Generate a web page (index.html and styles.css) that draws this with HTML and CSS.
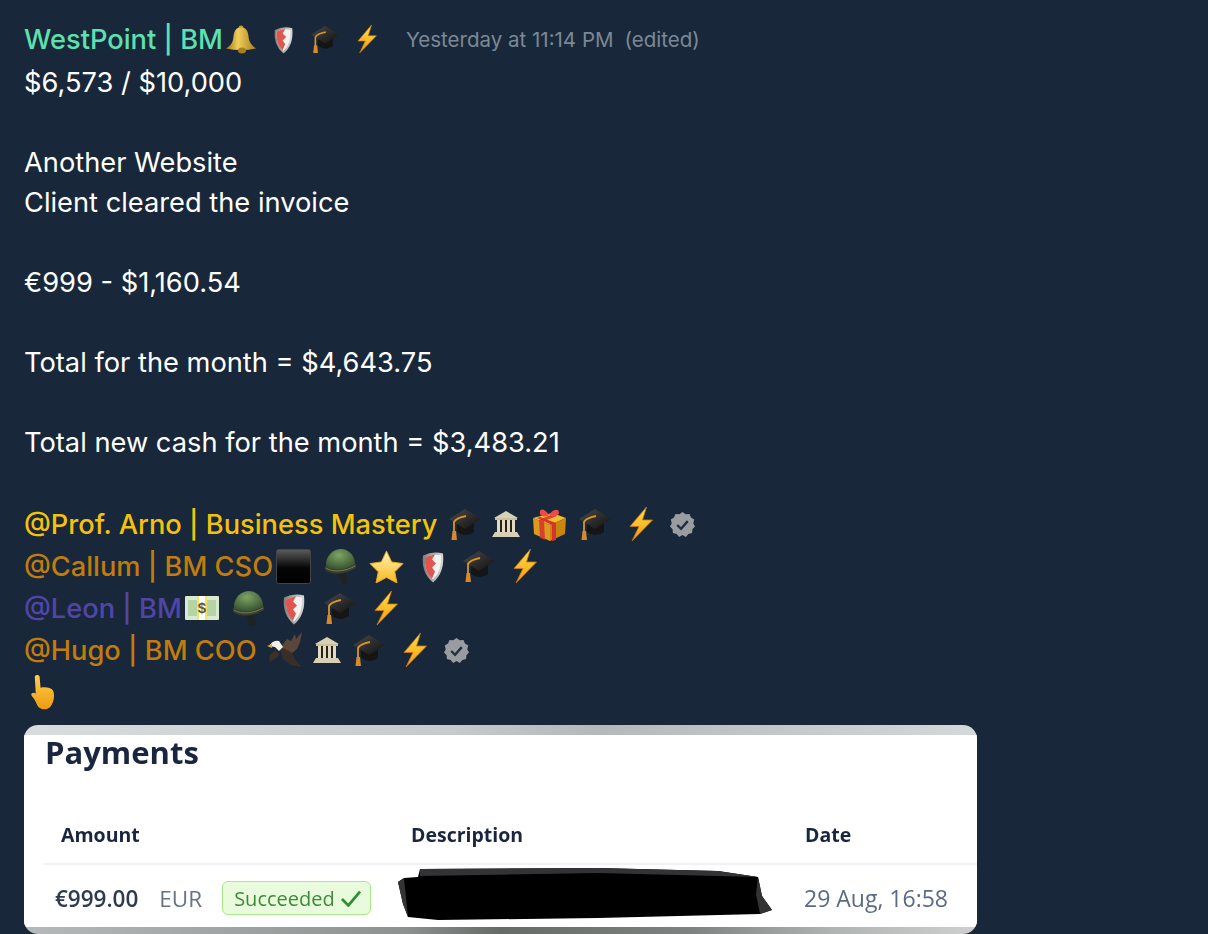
FILE: index.html
```html
<!DOCTYPE html>
<html lang="en">
<head>
    <meta charset="UTF-8">
    <meta name="viewport" content="width=device-width, initial-scale=1.0">
    <title>Message</title>
    <link rel="stylesheet" href="styles.css">
</head>
<body>
    <!-- Emoji drawings, reused through <use> -->
    <svg class="defs" aria-hidden="true">
        <defs>
            <linearGradient id="gBolt" x1="0" y1="0" x2="0" y2="1"><stop offset="0" stop-color="#ffe14d"/><stop offset="1" stop-color="#f59a0c"/></linearGradient>
            <linearGradient id="gGold" x1="0" y1="0" x2="1" y2="0"><stop offset="0" stop-color="#9b7414"/><stop offset=".4" stop-color="#f0cf5a"/><stop offset="1" stop-color="#a57d18"/></linearGradient>
            <linearGradient id="gCap" x1="0" y1="0" x2="1" y2="1"><stop offset="0" stop-color="#4a4a4a"/><stop offset="1" stop-color="#111"/></linearGradient>
            <linearGradient id="gSteel" x1="0" y1="0" x2="1" y2="0"><stop offset="0" stop-color="#7d7d7d"/><stop offset="1" stop-color="#d8d8d8"/></linearGradient>
            <linearGradient id="gStar" x1="0" y1="0" x2="0" y2="1"><stop offset="0" stop-color="#fff3b8"/><stop offset="1" stop-color="#f9b81e"/></linearGradient>
            <radialGradient id="gHelm" cx=".45" cy=".3" r=".7"><stop offset="0" stop-color="#7fa463"/><stop offset="1" stop-color="#34502f"/></radialGradient>
            <linearGradient id="gBlack" x1="0" y1="0" x2="0" y2="1"><stop offset="0" stop-color="#5c5c5c"/><stop offset=".55" stop-color="#050505"/><stop offset="1" stop-color="#000"/></linearGradient>
            <linearGradient id="gHand" x1="0" y1="0" x2="0" y2="1"><stop offset="0" stop-color="#ffcf4a"/><stop offset="1" stop-color="#ee9a12"/></linearGradient>
        </defs>

        <symbol id="bolt" viewBox="0 0 24 34">
            <path d="M17.500 0 1 19.500 10 19.500 3 34 23.500 13 13.500 13Z" fill="url(#gBolt)" stroke="#c9780a" stroke-width=".8"/>
        </symbol>
        <symbol id="cap" viewBox="0 0 32 32">
            <path d="M8 15v9q9 6 17 0v-9z" fill="#151515"/>
            <path d="M0 11 16 1l16 10-16 10z" fill="url(#gCap)"/>
            <path d="M17 8Q7 10 5 14v11" fill="none" stroke="#d9962a" stroke-width="1.800"/>
            <path d="M3.500 23h3.500l1 9H2.500z" fill="#d9882a"/>
        </symbol>
        <symbol id="shield" viewBox="0 0 24 32">
            <path d="M2 5Q12 0 22 3 24 22 12 32 0 22 2 5Z" fill="url(#gSteel)"/>
            <path d="M4 7Q12 3 20 5 21 21 12 29 3 21 4 7Z" fill="#f4f1ee"/>
            <path d="M4 7Q8 5 14 4L11 9l4 4-4 4 3 4-3 7Q3 21 4 7Z" fill="#e0564f"/>
        </symbol>
        <symbol id="bell" viewBox="0 0 30 28">
            <circle cx="15" cy="2.500" r="2.500" fill="#c59b2c"/>
            <path d="M15 2C8 2 8 8 7 14 6 19 3 21 0 23q15 3 30 0c-3-2-6-5-7-9-1-6-1-12-8-12Z" fill="url(#gGold)"/>
            <ellipse cx="16" cy="25" rx="4" ry="3" fill="#a87f1e"/>
        </symbol>
        <symbol id="temple" viewBox="0 0 28 28">
            <path d="M14 1 26 8H2z" fill="#d8d0b4"/>
            <rect x="3" y="8" width="22" height="2" fill="#c9c0a2"/>
            <rect x="5" y="10" width="18" height="12" fill="#2a2418"/>
            <rect x="5" y="10" width="3" height="12" fill="#e2dbc2"/>
            <rect x="10" y="10" width="3" height="12" fill="#e2dbc2"/>
            <rect x="15" y="10" width="3" height="12" fill="#e2dbc2"/>
            <rect x="20" y="10" width="3" height="12" fill="#e2dbc2"/>
            <path d="M3 22h22l3 5H0z" fill="#d8d0b4"/>
        </symbol>
        <symbol id="gift" viewBox="0 0 34 34">
            <path d="M1 11 20 6l14 5-16 7z" fill="#f0be2e"/>
            <path d="M1 11 18 18v16L2 27z" fill="#dd9a1c"/>
            <path d="M34 11 18 18v16l15-7z" fill="#c9860f"/>
            <path d="M8 10 24 16v17l-4 1V18L5 11z" fill="#d8322d"/>
            <path d="M25 9 12 14l1 19-5-2-1-18 14-6z" fill="#d8322d" opacity=".85"/>
            <path d="M17 8C12 1 7 1 8 7c1 3 6 3 9 1 3 2 9 2 10-2 0-5-6-4-10 2z" fill="#ee4a47"/>
        </symbol>
        <symbol id="verified" viewBox="0 0 26 26">
            <path d="M13 0l3.300 2.300 4-.3 1.500 3.700 3.400 2.100-1 3.900L26 15l-2.700 2.900-.3 4-3.900.9L16.500 26 13 24l-3.500 2-2.600-3.200-3.900-.9-.3-4L0 15l1.800-3.300-1-3.900 3.400-2.100L5.700 2l4 .3z" fill="#9a9ca0"/>
            <path d="M7.500 13.500l4 4 7-8" fill="none" stroke="#1f2f42" stroke-width="2.400"/>
        </symbol>
        <symbol id="square" viewBox="0 0 35 35">
            <rect x=".5" y=".5" width="34" height="34" rx="2" fill="url(#gBlack)" stroke="#444"/>
        </symbol>
        <symbol id="helmet" viewBox="0 0 32 36">
            <path d="M14 24l7-1 3 12-6 1z" fill="#1d2320"/>
            <path d="M2 19C1 8 9 1 17 1 25 1 31 8 31 16v2C22 22 10 24 2 19Z" fill="url(#gHelm)"/>
            <path d="M1 18C10 24 22 22 32 16v4C22 26 10 28 1 22Z" fill="#39402e"/>
            <path d="M2 20C10 25 22 23 31 18" fill="none" stroke="#8a8560" stroke-width=".8"/>
        </symbol>
        <symbol id="star" viewBox="0 0 36 34">
            <path d="M18 1l5.300 11.300L35 14l-8.500 8.500L28.800 34 18 28.300 7.200 34l2.300-11.500L1 14l11.700-1.700Z" fill="url(#gStar)" stroke="#e9a820" stroke-linejoin="round"/>
        </symbol>
        <symbol id="money" viewBox="0 0 34 26">
            <rect x="0" y="1" width="34" height="24" rx="1" fill="#d9ead0"/>
            <rect x="3" y="5" width="28" height="16" fill="#b6d3a6"/>
            <rect x="12" y="1" width="10" height="24" fill="#f6e36a"/>
            <rect x="14" y="1" width="6" height="24" fill="#fff"/>
        </symbol>
        <symbol id="eagle" viewBox="0 0 36 36">
            <path d="M13 16 20 7l4 2 4-7 1 5 6-7-2 10-3 7-6 5z" fill="#5a473a"/>
            <path d="M8 18 2 24l1 6 6-4 4-4z" fill="#3d3029"/>
            <path d="M12 14l12 6 6 10 5 5-11-2-8-6z" fill="#3a2e26"/>
            <path d="M2 14Q6 8 12 9l4 6-4 4-4-4z" fill="#f2efe8"/>
            <path d="M0 14l5-2v4z" fill="#e5a92a"/>
        </symbol>
        <symbol id="hand" viewBox="0 0 26 36">
            <path d="M5 2c0-3 5-3 5 0l1 11c5-1 11 0 13 3 2 5 1 12-3 17-4 4-10 3-13-1-2-4-3-7-6-10-2-3 1-5 4-3z" fill="url(#gHand)"/>
        </symbol>
    </svg>

    <article class="message">
        <header class="msg-head">
            <span class="author">WestPoint | BM</span>
            <svg class="ic bell g3"><use href="#bell"/></svg>
            <svg class="ic shield-s g17"><use href="#shield"/></svg>
            <svg class="ic cap-s g17"><use href="#cap"/></svg>
            <svg class="ic bolt-s g18"><use href="#bolt"/></svg>
            <span class="stamp">Yesterday at 11:14 PM</span>
            <span class="edited">(edited)</span>
        </header>

        <div class="msg-body">
            <p>$6,573 / $10,000</p>
            <p class="blank"></p>
            <p>Another Website</p>
            <p>Client cleared the invoice</p>
            <p class="blank"></p>
            <p>€999 - $1,160.54</p>
            <p class="blank"></p>
            <p>Total for the month = $4,643.75</p>
            <p class="blank"></p>
            <p>Total new cash for the month = $3,483.21</p>
            <p class="blank"></p>
        </div>

        <div class="mentions">
            <div class="mention">
                <span class="gold">@Prof. Arno | Business Mastery</span>
                <svg class="ic cap g12"><use href="#cap"/></svg>
                <svg class="ic temple g11"><use href="#temple"/></svg>
                <svg class="ic gift g12"><use href="#gift"/></svg>
                <svg class="ic cap g13"><use href="#cap"/></svg>
                <svg class="ic bolt g18"><use href="#bolt"/></svg>
                <svg class="ic verified g17"><use href="#verified"/></svg>
            </div>
            <div class="mention">
                <span class="amber">@Callum | BM CSO</span>
                <svg class="ic square g3"><use href="#square"/></svg>
                <svg class="ic helmet g13"><use href="#helmet"/></svg>
                <svg class="ic star g13"><use href="#star"/></svg>
                <svg class="ic shield g17"><use href="#shield"/></svg>
                <svg class="ic cap g18"><use href="#cap"/></svg>
                <svg class="ic bolt g18"><use href="#bolt"/></svg>
            </div>
            <div class="mention">
                <span class="violet">@Leon | BM</span>
                <svg class="ic money g3" viewBox="0 0 34 26"><use href="#money"/><text x="17" y="18" class="bill">$</text></svg>
                <svg class="ic helmet g13"><use href="#helmet"/></svg>
                <svg class="ic shield g18"><use href="#shield"/></svg>
                <svg class="ic cap g18"><use href="#cap"/></svg>
                <svg class="ic bolt g18"><use href="#bolt"/></svg>
            </div>
            <div class="mention">
                <span class="amber">@Hugo | BM COO</span>
                <svg class="ic eagle g10"><use href="#eagle"/></svg>
                <svg class="ic temple g10"><use href="#temple"/></svg>
                <svg class="ic cap g12"><use href="#cap"/></svg>
                <svg class="ic bolt g18"><use href="#bolt"/></svg>
                <svg class="ic verified g17"><use href="#verified"/></svg>
            </div>
            <div class="mention">
                <svg class="ic hand g6"><use href="#hand"/></svg>
            </div>
        </div>

        <!-- Attached screenshot -->
        <div class="shot">
            <div class="shot-inner">
                <h2>Payments</h2>
                <div class="pay-head">
                    <span>Amount</span>
                    <span>Description</span>
                    <span>Date</span>
                </div>
                <div class="pay-row">
                    <div class="pay-amount">
                        <b>€999.00</b>
                        <span class="cur">EUR</span>
                        <span class="badge">Succeeded
                            <svg class="tick" viewBox="0 0 20 16"><path d="M1.500 8.500 7.500 14.500 18.500 1.500" fill="none" stroke="#2f8f2f" stroke-width="2.600"/></svg>
                        </span>
                    </div>
                    <span class="pay-date">29 Aug, 16:58</span>
                </div>
                <svg class="redact" viewBox="0 0 374 52">
                    <path d="M0 14 6 10 20 9 22 1 200 0 320 3 360 9 364 28 374 42 362 46 200 50 40 52 10 49 5 36Z" fill="#000"/>
                    <path d="M0 14 6 10 10 49 5 36ZM22 1 200 0 320 3 360 9 200 5 22 8ZM360 9 364 28 374 42 362 46 358 26Z" fill="#333"/>
                </svg>
            </div>
        </div>
    </article>
</body>
</html>
```

FILE: styles.css
```css
html, body {
    height: 100%;
}

body {
    margin: 0;
    overflow: hidden;
    background-color: #18283a;
    color: #fff;
    font-family: Inter, "Liberation Sans", sans-serif;
    font-size: 27.25px;
}

.defs {
    position: absolute;
    width: 0;
    height: 0;
}

.message {
    padding: 19px 0 0 24px;
}

.msg-head {
    display: flex;
    align-items: center;
    height: 40px;
    margin-bottom: 4px;
}

.author {
    color: #5fe0b0;
    font-weight: 500;
}

.stamp {
    margin-left: 29px;
    color: #7c8896;
    font-size: 20.5px;
}

.edited {
    margin-left: 11px;
    color: #7c8896;
    font-size: 20.5px;
}

.msg-body p {
    margin: 0;
    height: 40px;
    line-height: 40px;
}

.mentions {
    display: flex;
    flex-direction: column;
}

.mention {
    display: flex;
    align-items: center;
    height: 42px;
    font-weight: 500;
}

.gold { color: #f4c20d; }
.amber { color: #c27c0e; }
.violet { color: #5146a8; }

/* emoji sizes */
.ic { flex: none; }
.bell { width: 30px; height: 29px; }
.shield { width: 24px; height: 33px; }
.shield-s { width: 21px; height: 29px; }
.cap-s { width: 28px; height: 28px; }
.cap { width: 32px; height: 32px; }
.bolt { width: 24px; height: 34px; }
.bolt-s { width: 20px; height: 28px; }
.temple { width: 28px; height: 28px; }
.gift { width: 34px; height: 34px; }
.verified { width: 25px; height: 25px; }
.square { width: 35px; height: 35px; }
.helmet { width: 32px; height: 36px; }
.star { width: 35px; height: 33px; }
.money { width: 34px; height: 26px; }
.eagle { width: 36px; height: 36px; }
.hand { width: 25px; height: 35px; }

.bill {
    font-family: "Liberation Sans", sans-serif;
    font-size: 15px;
    font-weight: bold;
    fill: #6b5a10;
    text-anchor: middle;
}

/* spacing between emoji */
.g3 { margin-left: 3px; }
.g6 { margin-left: 6px; }
.g10 { margin-left: 10px; }
.g11 { margin-left: 11px; }
.g12 { margin-left: 12px; }
.g13 { margin-left: 13px; }
.g17 { margin-left: 17px; }
.g18 { margin-left: 18px; }

.shot {
    margin-top: 12px;
    width: 953px;
    height: 209px;
    box-sizing: border-box;
    padding: 10px 0 7px;
    border-radius: 14px;
    overflow: hidden;
    background:
        linear-gradient(90deg, #d9dcdc, #c6caca 45%, #b4b8b8 60%, #d5d8d8) top / 100% 10px no-repeat,
        linear-gradient(90deg, #b5b9b9, #8d9190 40%, #666b68 50%, #7e8280 70%, #b0b4b3 85%, #cdd0cf) bottom / 100% 7px no-repeat,
        #fff;
    font-family: "Open Sans", "Noto Sans", sans-serif;
}

.shot-inner {
    position: relative;
    height: 100%;
    background: #fff;
    color: #1a2540;
    filter: blur(0.4px);
}

.shot h2 {
    margin: 0;
    padding: 0 0 0 21px;
    height: 71px;
    font-size: 31px;
    line-height: 34px;
    font-weight: 700;
}

.pay-head {
    display: grid;
    grid-template-columns: 350px 394px 1fr;
    align-items: center;
    margin-left: 20px;
    padding-left: 17px;
    height: 57px;
    border-bottom: 2px solid #eef2f6;
    font-size: 19.5px;
    font-weight: 700;
}

.pay-row {
    display: flex;
    justify-content: space-between;
    align-items: center;
    height: 60px;
    padding: 3px 29px 0 31px;
    font-size: 22.5px;
}

.pay-amount {
    display: flex;
    align-items: center;
}

.pay-amount b {
    font-weight: 600;
    color: #2f3a52;
}

.cur {
    margin-left: 21px;
    color: #697386;
}

.badge {
    display: flex;
    align-items: center;
    gap: 5px;
    margin-left: 20px;
    padding: 0 8px 0 11px;
    height: 32px;
    font-size: 20px;
    color: #3f8a3a;
    background: #e8fbdc;
    border: 1px solid #a9e88a;
    border-radius: 6px;
}

.tick {
    width: 22px;
    height: 17px;
}

.pay-date {
    color: #5b6b85;
    font-size: 23px;
}

.redact {
    position: absolute;
    left: 374px;
    top: 133px;
    width: 374px;
    height: 52px;
}
```
